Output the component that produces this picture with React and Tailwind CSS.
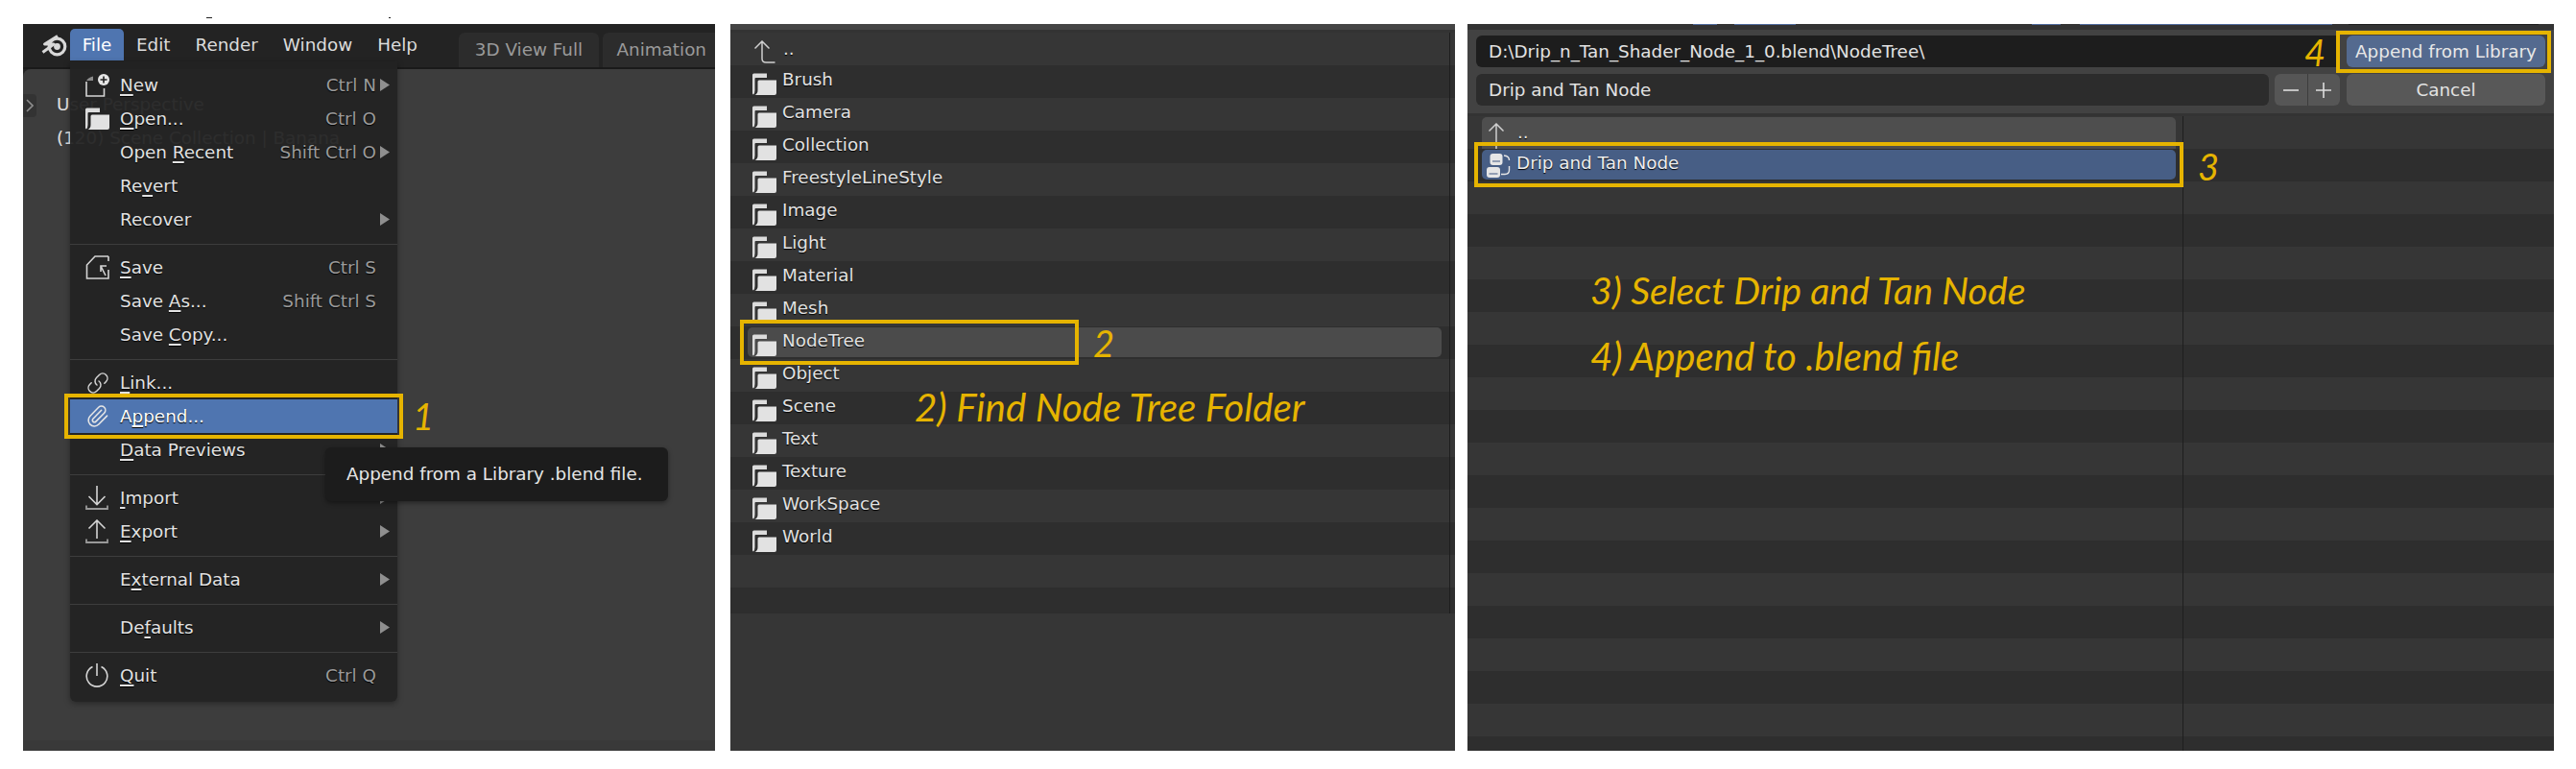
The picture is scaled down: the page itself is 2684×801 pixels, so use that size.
import React from "react";
import { Link as LinkIcon, Paperclip } from "lucide-react";

const shadow = "[text-shadow:0_1px_1px_#000]";
const ul = "underline decoration-[1.5px] underline-offset-[3px] [text-decoration-skip-ink:none]";

function Mn({ a = "", k = "", b = "" }) {
  return (
    <span>
      {a}
      <span className={ul}>{k}</span>
      {b}
    </span>
  );
}

function Folder({ className = "" }) {
  return (
    <svg width="25" height="23" viewBox="0 0 25 23" className={className}>
      <path d="M0 2 Q0 0.5 1.5 0.5 H15 V5 H3.5 Q2.5 5 2.5 6 V18 Q2.5 21 1 22.5 Q0 22 0 21 Z" fill="#dcdcdc" />
      <path d="M5.5 9 Q5.5 7.5 7 7.5 H25 V21 Q25 23 23 23 H2.5 Q5.5 21.5 5.5 18 Z" fill="#e2e2e2" />
    </svg>
  );
}

const stroke = { fill: "none", stroke: "#d4d4d4", strokeWidth: 1.6 };

function NewIcon() {
  return (
    <svg width="25" height="24" viewBox="0 0 25 24">
      <path d="M1 8 V23 H19.5 V15" {...stroke} />
      <path d="M1 7 Q3 3.5 8 2.5 V7 Z" fill="#8c8c8c" />
      <circle cx="19" cy="6" r="6" fill="#e6e6e6" />
      <path d="M15.5 6 H22.5 M19 2.5 V9.5" stroke="#222" strokeWidth="1.6" />
    </svg>
  );
}
function SaveIcon() {
  return (
    <svg width="25" height="25" viewBox="0 0 25 25">
      <path d="M24 1 H10 L1.5 10 V24 H24 V15" {...stroke} />
      <path d="M24 1 V6" {...stroke} />
      <path d="M22 11 H16 V17 M16 11 L21 21" {...stroke} />
    </svg>
  );
}
function ImportIcon() {
  return (
    <svg width="25" height="25" viewBox="0 0 25 25">
      <path d="M12 0 V19 M3.5 11 L12 19.5 L20.5 11" {...stroke} />
      <path d="M1 20.5 V24 H23 V20.5" stroke="#999" strokeWidth="1.8" fill="none" />
    </svg>
  );
}
function ExportIcon() {
  return (
    <svg width="25" height="25" viewBox="0 0 25 25">
      <path d="M12 20 V1 M3.5 9.5 L12 1 L20.5 9.5" {...stroke} />
      <path d="M1 20.5 V24 H23 V20.5" stroke="#999" strokeWidth="1.8" fill="none" />
    </svg>
  );
}
function QuitIcon() {
  return (
    <svg width="25" height="25" viewBox="0 0 25 25">
      <path d="M7.5 3.5 A10.8 10.8 0 1 0 16.5 3.5" {...stroke} />
      <path d="M12 0 V13" {...stroke} />
    </svg>
  );
}
function UpArrow({ tail = true, h = 24 }) {
  return (
    <svg width="22" height={h} viewBox={`0 0 22 ${h}`}>
      {tail ? (
        <path d="M8 1 V19 Q8 23 12 23 H21.5 M0.5 8.5 L8 1 L15.5 8.5" fill="none" stroke="#cfcfcf" strokeWidth="1.5" />
      ) : (
        <path d={`M8 1 V${h} M0.5 8.5 L8 1 L15.5 8.5`} fill="none" stroke="#cfcfcf" strokeWidth="1.5" />
      )}
    </svg>
  );
}
function NodeIcon() {
  return (
    <svg width="26" height="25" viewBox="0 0 26 25">
      <rect x="3.5" y="0" width="13" height="12" rx="3" fill="#e6e6e6" />
      <path d="M6 8 H14" stroke="#6f7f9c" strokeWidth="1.4" />
      <rect x="0" y="14" width="14" height="11" rx="3" fill="#e6e6e6" />
      <path d="M2.5 21 H11.5" stroke="#6f7f9c" strokeWidth="1.4" />
      <path d="M18 2 Q23.5 2.5 23.5 7" fill="none" stroke="#e6e6e6" strokeWidth="1.4" />
      <path d="M23.5 13 V17 Q23.5 21.5 19 21.5 H15" fill="none" stroke="#e6e6e6" strokeWidth="1.4" />
    </svg>
  );
}
function Logo() {
  return (
    <svg width="27" height="24" viewBox="0 0 27 24">
      <circle cx="16.5" cy="12.5" r="8.3" fill="none" stroke="#d8d8d8" strokeWidth="3.2" />
      <circle cx="16.5" cy="12.5" r="3.4" fill="#d8d8d8" />
      <path d="M17 1.5 L3.5 10 H13 L1.5 18.5" fill="none" stroke="#d8d8d8" strokeWidth="3" strokeLinejoin="round" />
    </svg>
  );
}

function Row({ icon, label, shortcut, arrow, active }) {
  return (
    <div
      className={`flex h-[35px] items-center pl-[16px] pr-[8px] text-[18.35px] text-[#e2e2e2] ${shadow} ${
        active ? "bg-[#4f75b0] text-white" : ""
      }`}
    >
      <div className="flex w-[25px] shrink-0 items-center justify-center">{icon}</div>
      <div className="ml-[11px] flex-1 whitespace-nowrap">{label}</div>
      {shortcut && <div className="whitespace-nowrap text-[#9b9b9b]">{shortcut}</div>}
      <div className="ml-[3px] flex w-[11px] justify-end">
        {arrow && (
          <svg width="10" height="13" viewBox="0 0 10 13">
            <path d="M0 0 L10 6.5 L0 13 Z" fill="#8f8f8f" />
          </svg>
        )}
      </div>
    </div>
  );
}

function Sep() {
  return <div className="mb-[6px] mt-[8px] h-px bg-[#3d3d3d]" />;
}

function Menu() {
  return (
    <div className="absolute left-[49px] top-[39px] z-10 w-[341px] rounded-b-[6px] bg-[#232323]/95 pb-[10px] pt-[7px] shadow-[0_2px_6px_rgba(0,0,0,0.35)]">
      <Row icon={<NewIcon />} label={<Mn k="N" b="ew" />} shortcut="Ctrl N" arrow />
      <Row icon={<Folder />} label={<Mn k="O" b="pen..." />} shortcut="Ctrl O" />
      <Row label={<Mn a="Open " k="R" b="ecent" />} shortcut="Shift Ctrl O" arrow />
      <Row label={<Mn a="Re" k="v" b="ert" />} />
      <Row label="Recover" arrow />
      <Sep />
      <Row icon={<SaveIcon />} label={<Mn k="S" b="ave" />} shortcut="Ctrl S" />
      <Row label={<Mn a="Save " k="A" b="s..." />} shortcut="Shift Ctrl S" />
      <Row label={<Mn a="Save " k="C" b="opy..." />} />
      <Sep />
      <Row icon={<LinkIcon size={24} strokeWidth={1.5} color="#d4d4d4" className="-scale-x-100 rotate-90" />} label={<Mn k="L" b="ink..." />} />
      <Row active icon={<Paperclip size={25} strokeWidth={1.5} color="#e6e6e6" />} label={<Mn a="A" k="p" b="pend..." />} />
      <Row label={<Mn k="D" b="ata Previews" />} arrow />
      <Sep />
      <Row icon={<ImportIcon />} label={<Mn k="I" b="mport" />} arrow />
      <Row icon={<ExportIcon />} label={<Mn k="E" b="xport" />} arrow />
      <Sep />
      <Row label={<Mn a="E" k="x" b="ternal Data" />} arrow />
      <Sep />
      <Row label={<Mn a="De" k="f" b="aults" />} arrow />
      <Sep />
      <Row icon={<QuitIcon />} label={<Mn k="Q" b="uit" />} shortcut="Ctrl Q" />
    </div>
  );
}

function Mark({ className }) {
  return <div className={`absolute z-20 border-4 border-[#e6b400] ${className}`} />;
}
function Note({ className, children }) {
  return (
    <div className={`absolute z-20 whitespace-nowrap font-['Lato',sans-serif] font-normal italic leading-none text-[#e6b400] ${className}`}>
      {children}
    </div>
  );
}

function Panel1() {
  const items = ["Edit", "Render", "Window", "Help"];
  return (
    <div className="relative flex h-[757px] w-[721px] shrink-0 flex-col overflow-hidden bg-[#232323]">
      <div className="flex h-[45px] shrink-0">
        <div className="flex w-[49px] shrink-0 items-center justify-end pr-[3px] pt-[1px]">
          <Logo />
        </div>
        <div className="mt-[5px] flex h-[33px] w-[56px] shrink-0 items-center justify-center rounded-t-[5px] bg-[#4f75b0] text-[18.35px] text-white">
          File
        </div>
        <div className="mt-[5px] flex h-[33px] w-[349px] shrink-0 items-center gap-[2px] pl-px text-[18.35px] text-[#dcdcdc]">
          {items.map((t) => (
            <div key={t} className="shrink-0 px-[12px]">
              {t}
            </div>
          ))}
        </div>
        <div className="mt-[9px] flex shrink-0 gap-[4px] text-[18.35px] text-[#9a9a9a]">
          <div className="flex h-[36px] w-[146px] items-center justify-center rounded-t-[6px] bg-[#2c2c2c]">3D View Full</div>
          <div className="flex h-[36px] w-[117px] items-center justify-end rounded-tl-[6px] bg-[#2c2c2c] pr-[9px]">Animation</div>
        </div>
      </div>
      <div className="h-[2px] shrink-0 bg-[#1a1a1a]" />
      <div className="relative flex flex-1 flex-col overflow-hidden rounded-tl-[8px] bg-[#3d3d3d]">
        <div className="absolute left-0 top-[26px] flex h-[24px] w-[14px] items-center justify-center rounded-r-[4px] bg-[#333333]">
          <svg width="8" height="14" viewBox="0 0 8 14">
            <path d="M1 1 L7 7 L1 13" fill="none" stroke="#8d8d8d" strokeWidth="1.6" />
          </svg>
        </div>
        <div className="flex-1 pl-[35px] pt-[19px] text-[18.35px] leading-[35px] text-[#e2e2e2]">
          <div>User Perspective</div>
          <div>(120) Scene Collection | Banana</div>
        </div>
        <div className="h-[11px] shrink-0 bg-[#393939]" />
      </div>
      <Menu />
      <div className="absolute left-[315px] top-[441px] z-20 flex h-[56px] w-[357px] items-center rounded-[6px] bg-[#1c1c1c] pl-[22px] text-[18.35px] text-[#e6e6e6] shadow-[0_2px_5px_rgba(0,0,0,0.4)]">
        Append from a Library .blend file.
      </div>
      <Mark className="left-[43px] top-[385px] h-[47px] w-[353px]" />
      <Note className="left-[406px] top-[389px] text-[38px]">1</Note>
    </div>
  );
}

function Stripe({ i, children, className = "" }) {
  return (
    <div className={`relative flex h-[34px] shrink-0 items-center ${i % 2 ? "bg-[#2e2e2e]" : "bg-[#363636]"} ${className}`}>
      {children}
    </div>
  );
}

function Panel2() {
  const names = ["Brush", "Camera", "Collection", "FreestyleLineStyle", "Image", "Light", "Material", "Mesh", "NodeTree", "Object", "Scene", "Text", "Texture", "WorkSpace", "World"];
  return (
    <div className="relative ml-[16px] flex h-[757px] w-[755px] shrink-0 flex-col overflow-hidden bg-[#363636]">
      <div className="h-[6px] shrink-0 bg-[#444444]" />
      <div className="h-[3px] shrink-0 bg-[#333333]" />
      <div className="relative flex h-[605px] shrink-0 flex-col overflow-hidden">
        <Stripe i={0}>
          <div className="ml-[25px] mt-[6px]">
            <UpArrow />
          </div>
          <div className={`absolute left-[55px] top-[0px] text-[18.35px] leading-[34px] text-[#e2e2e2] ${shadow}`}>..</div>
        </Stripe>
        {names.map((n, idx) => (
          <Stripe key={n} i={idx + 1}>
            {n === "NodeTree" && <div className="absolute bottom-[2px] left-[18px] right-[14px] top-[1px] rounded-[5px] bg-[#4b4b4b]" />}
            <Folder className="relative ml-[23px] mt-[5px]" />
            <div className={`relative ml-[6px] -mt-[4px] text-[18.35px] text-[#e2e2e2] ${shadow}`}>{n}</div>
          </Stripe>
        ))}
        <Stripe i={16} />
        <Stripe i={17} />
        <div className="absolute bottom-0 left-[749px] top-0 w-px bg-[#1e1e1e]" />
      </div>
      <div className="flex-1 bg-[#363636]" />
      <Mark className="left-[10px] top-[308px] h-[47px] w-[353px]" />
      <Note className="left-[378px] top-[313px] text-[38px]">2</Note>
      <Note className="left-[192px] top-[379px] text-[40.3px]">2) Find Node Tree Folder</Note>
    </div>
  );
}

function Panel3() {
  return (
    <div className="relative ml-[13px] flex h-[757px] w-[1132px] shrink-0 flex-col overflow-hidden bg-[#363636]">
      <div className="flex h-px shrink-0 bg-[#333333]">
        <div className="w-[235px]" />
        <div className="w-[25px] bg-[#4f6a9c]" />
        <div className="w-[18px]" />
        <div className="w-[64px] bg-[#4f6a9c]" />
        <div className="w-[246px]" />
        <div className="w-[30px] bg-[#4f6a9c]" />
        <div className="w-[20px]" />
        <div className="w-[263px] bg-[#4f6a9c]" />
        <div className="w-[17px]" />
        <div className="w-[198px] bg-[#1d1d1d]" />
      </div>
      <div className="h-[5px] shrink-0 bg-[#333333]" />
      <div className="flex h-[87px] shrink-0 flex-col gap-[7px] bg-[#424242] px-[9px] pt-[6px] text-[18.35px] text-[#e2e2e2]">
        <div className="flex h-[33px] gap-[7px]">
          <div className="flex flex-1 items-center rounded-l-[6px] bg-[#1d1d1d] pl-[13px]">D:\Drip_n_Tan_Shader_Node_1_0.blend\NodeTree\</div>
          <div className="flex w-[207px] items-center justify-center rounded-[6px] bg-[#546a8f] text-[#e8e8e8]">Append from Library</div>
        </div>
        <div className="flex h-[33px] gap-[6px]">
          <div className="flex flex-1 items-center rounded-[6px] bg-[#2c2c2c] pl-[13px]">Drip and Tan Node</div>
          <div className="flex h-[33px] w-[68px] rounded-[6px] bg-[#565656]">
            <div className="flex flex-1 items-center justify-center border-r border-[#3d3d3d]">
              <svg width="16" height="2" viewBox="0 0 16 2"><path d="M0 1 H16" stroke="#dedede" strokeWidth="1.6" /></svg>
            </div>
            <div className="flex flex-1 items-center justify-center">
              <svg width="16" height="16" viewBox="0 0 16 16"><path d="M0 8 H16 M8 0 V16" stroke="#dedede" strokeWidth="1.6" /></svg>
            </div>
          </div>
          <div className="ml-px flex w-[207px] items-center justify-center rounded-[6px] bg-[#585858]">Cancel</div>
        </div>
      </div>
      <div className="h-[3px] shrink-0 bg-[#333333]" />
      <div className="relative flex flex-1 flex-col overflow-hidden">
        <Stripe i={0}>
          <div className="absolute bottom-0 left-[15px] top-[1px] w-[723px] rounded-t-[5px] bg-[#4e4e4e]" />
          <div className="relative ml-[22px] mt-[7px] h-[27px]">
            <UpArrow tail={false} h={27} />
          </div>
          <div className={`absolute left-[52px] top-0 text-[18.35px] leading-[34px] text-[#e2e2e2] ${shadow}`}>..</div>
        </Stripe>
        <Stripe i={1}>
          <div className="absolute bottom-[2px] left-[15px] top-[1px] w-[723px] rounded-[5px] bg-[#475e85]" />
          <div className="relative ml-[20px] mt-[1px]">
            <NodeIcon />
          </div>
          <div className={`relative ml-[5px] -mt-[4px] text-[18.35px] text-[#eeeeee] ${shadow}`}>Drip and Tan Node</div>
        </Stripe>
        {Array.from({ length: 18 }, (_, i) => (
          <Stripe key={i} i={i + 2} />
        ))}
        <div className="absolute bottom-0 left-[745px] top-0 w-px bg-[#1e1e1e]" />
      </div>
      <Mark className="left-[7px] top-[123px] h-[47px] w-[739px]" />
      <Mark className="left-[905px] top-[7px] h-[44px] w-[224px]" />
      <Note className="left-[872px] top-[10px] text-[38px]">4</Note>
      <Note className="left-[761px] top-[129px] text-[38px]">3</Note>
      <Note className="left-[128px] top-[257px] text-[39.3px]">3) Select Drip and Tan Node</Note>
      <Note className="left-[128px] top-[326px] text-[40.1px]">4) Append to .blend file</Note>
    </div>
  );
}

export default function App() {
  return (
    <div className="relative h-[801px] w-[2684px] overflow-hidden bg-white font-['DejaVu_Sans',sans-serif]">
      <div className="absolute left-[215px] top-[18px] h-px w-[6px] bg-[#222222]" />
      <div className="absolute left-[405px] top-[18px] h-px w-[2px] bg-[#222222]" />
      <div className="flex pl-[24px] pt-[25px]">
        <Panel1 />
        <Panel2 />
        <Panel3 />
      </div>
    </div>
  );
}
